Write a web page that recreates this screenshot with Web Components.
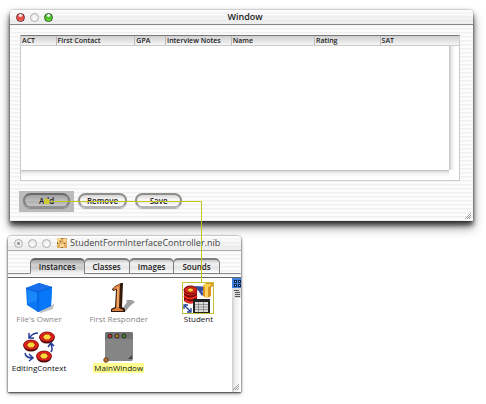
<!DOCTYPE html>
<html lang="en">
<head>
<meta charset="utf-8">
<title>Interface Builder</title>
<style>
  html { background: #fff; }
  body {
    margin: 0;
    font-family: "Open Sans", "Noto Sans", sans-serif;
    font-size: 8px;
    line-height: 10px;
    color: #222;
    --stripes: repeating-linear-gradient(#fcfcfc 0 2px, #f0f0f0 2px 3px, #f6f6f6 3px 4px);
  }
</style>
</head>
<body>
<desk-top>
  <aqua-window class="form" lights="active" heading="Window">
    <form-body></form-body>
  </aqua-window>
  <aqua-window class="nib" lights="idle" heading="StudentFormInterfaceController.nib" document>
    <tab-bar></tab-bar>
    <instance-pane>
      <nib-item icon="cube" dim>File's Owner</nib-item>
      <nib-item icon="one" dim>First Responder</nib-item>
      <nib-item icon="student">Student</nib-item>
      <nib-item icon="context">EditingContext</nib-item>
      <nib-item icon="window" marked>MainWindow</nib-item>
    </instance-pane>
  </aqua-window>
  <connection-line></connection-line>
</desk-top>

<script>
const define = (name, html, setup) => {
  const tpl = document.createElement('template');
  tpl.innerHTML = html;
  customElements.define(name, class extends HTMLElement {
    constructor() {
      super();
      this.attachShadow({ mode: 'open' }).append(document.importNode(tpl.content, true));
    }
    connectedCallback() { if (setup) setup(this, this.shadowRoot); }
  });
};

define('desk-top', `
<style>
  :host { display: flex; flex-direction: column; align-items: flex-start; gap: 15px; position: relative; padding: 10px 13px 12px 8px; }
  ::slotted(.form) { align-self: stretch; margin-left: 2px; box-shadow: 0 0 2px #0007, 0 4px 5px #000a, 0 6px 11px #0007; }
  ::slotted(.nib) { width: 50%; min-width: 232px; box-shadow: 0 0 2px #0008, 0 1px 2px #0009, 0 2px 4px #0004; }
</style>
<slot></slot>`);

define('traffic-lights', `
<style>
  :host { display: flex; gap: 5px; }
  button { appearance: none; width: 9px; height: 9px; padding: 0; border: 1px solid #b0b0b0; border-radius: 50%; background: radial-gradient(circle at 50% 70%, #fff, #e2e2e2); }
  :host([state=active]) .close { border-color: #6e2a28; background: radial-gradient(circle at 50% 15%, #fff 0 10%, #e23c34 45%, #ff8d82); }
  :host([state=active]) .zoom { border-color: #255a12; background: radial-gradient(circle at 50% 15%, #fff 0 10%, #37b812 45%, #aaff70); }
  :host([state=idle]) .close { background: radial-gradient(#999 0 1px, #eee 2px); }
</style>
<button class="close" aria-label="Close"></button><button aria-label="Minimize"></button><button class="zoom" aria-label="Zoom"></button>`);

define('resize-grip', `
<style>:host { display: block; width: 9px; height: 9px; } svg { display: block; }</style>
<svg width="9" height="9" viewBox="0 0 9 9"><path d="M2 8 8 2M4 8l4-4M6 8l2-2" stroke="#888" stroke-width=".8"/></svg>`);

define('aqua-window', `
<style>
  :host { display: block; position: relative; background: var(--stripes); border-radius: 4px 4px 0 0; }
  header { display: grid; grid-template-columns: auto 1fr 22px; align-items: center; box-sizing: border-box; height: 15px; padding: 0 14px 0 6px; border-bottom: 1px solid #888; border-radius: 4px 4px 0 0; background: linear-gradient(#fff8, #d8d8d866), var(--stripes); }
  h1 { display: flex; justify-content: center; align-items: center; gap: 3px; margin: 0; font-size: 9px; line-height: 12px; font-weight: 600; white-space: nowrap; }
  :host([document]) header { grid-template-columns: auto 1fr; column-gap: 6px; padding: 0 6px; border-color: #aaa; }
  :host([document]) h1 { justify-content: flex-start; font-weight: 400; color: #444; }
  h1 svg { display: none; }
  :host([document]) h1 svg { display: block; }
  resize-grip { position: absolute; right: 1px; bottom: 1px; }
</style>
<header><traffic-lights></traffic-lights>
<h1><svg width="10" height="10" viewBox="0 0 10 10"><rect width="10" height="10" fill="#e0b068"/><path d="M0 0h4v2H2v3H0zM6 1h3v3H7zM3 6h4v3H3z" fill="#f8d994"/><path d="M4 0h2v1H4zM0 4h1v2H0zM3 3h1v1H3zM7 5h1v1H7zM4 9h2v1H4z" fill="#9b6326"/></svg><span></span></h1></header>
<slot></slot><resize-grip></resize-grip>`,
(el, root) => {
  root.querySelector('span').textContent = el.getAttribute('heading');
  root.querySelector('traffic-lights').setAttribute('state', el.getAttribute('lights'));
});

define('record-table', `
<style>
  :host { display: grid; grid-template: auto 124px 10px / 1fr 10px; border: 1px solid #ccc; border-top-color: #777; background: #fff; }
  table { grid-column: 1 / 3; width: 100%; table-layout: fixed; border-collapse: collapse; background: linear-gradient(#d0d0d0, #eee 70%, #fafafa); }
  th { height: 9px; padding: 0 0 0 1px; border-bottom: 1px solid #ccc; border-left: 1px solid #bbb; text-align: left; font-size: 7px; line-height: 8px; font-weight: 600; white-space: nowrap; }
  th:first-child { border-left: 0; }
  .v { background: linear-gradient(90deg, #bbb, #e6e6e6 2px, #f3f3f3 4px, #fff 6px); }
  .h { background: linear-gradient(#bbb, #e6e6e6 2px, #f5f5f5 4px, #fff 7px); }
</style>
<table>
  <colgroup><col style="width:8%"><col style="width:18%"><col style="width:7%"><col style="width:15%"><col style="width:19%"><col style="width:15%"><col style="width:18%"></colgroup>
  <thead><tr><th>ACT</th><th>First Contact</th><th>GPA</th><th>Interview Notes</th><th>Name</th><th>Rating</th><th>SAT</th></tr></thead>
</table>
<div></div><div class="v"></div><div class="h"></div>`);

define('aqua-button', `
<style>
  :host { display: block; padding: 2px 4px 4px; }
  :host([selected]) { background: #bbb; }
  button { appearance: none; display: block; min-width: 47px; height: 15px; padding: 0 7px; border: 2px solid #8f8f8a; border-bottom-color: #b4b4b4; border-radius: 8px; background: linear-gradient(#d5d5d5, #fafafa 45%, #e8e8e8 60%, #fff); color: #222; font: 600 8px/10px "Open Sans", sans-serif; box-shadow: 0 1px 1px #0004; }
  :host([selected]) button { border-color: #6a6a6a #7c7c7c #909090; background: linear-gradient(#a0a0a0, #bcbcbc 50%, #b0b0b0 60%, #c8c8c8); }
</style>
<button><slot></slot></button>`);

define('form-body', `
<style>
  :host { display: flex; flex-direction: column; gap: 10px; padding: 10px 13px 9px 9px; }
  record-table { margin-left: 1px; }
  div { display: flex; }
</style>
<record-table></record-table>
<div><aqua-button selected>Add</aqua-button><aqua-button>Remove</aqua-button><aqua-button>Save</aqua-button></div>`);

define('tab-bar', `
<style>
  :host { display: block; padding: 7px 0 3px; }
  div { display: flex; justify-content: center; background: linear-gradient(#888, #888) bottom / 100% 1px no-repeat; }
  button { appearance: none; height: 16px; margin: 0 -1px 0 0; padding: 0 8px; border: 1px solid #808080; border-top-width: 2px; border-radius: 5px 5px 0 0; background: linear-gradient(#ccc, #f2f2f2 30%, #e4e4e4 60%, #fff); color: #222; font: 600 8px/10px "Open Sans", sans-serif; }
  button[aria-selected=true] { border-color: #666 #777 #f4f4f4; background: linear-gradient(#a4a4a4, #d4d4d4 40%, #c6c6c6 60%, #f4f4f4); }
</style>
<div role="tablist"><button role="tab" aria-selected="true">Instances</button><button role="tab">Classes</button><button role="tab">Images</button><button role="tab">Sounds</button></div>`);

define('instance-pane', `
<style>
  :host { display: grid; grid-template-columns: 1fr 9px; border-top: 1px solid #666; background: #fff; }
  .items { display: grid; grid-template-columns: 62fr 97fr 62fr; gap: 7px 0; padding: 4px 2px 19px 0; }
  aside { background: linear-gradient(90deg, #ccc, #eee 3px, #f7f7f7 6px, #fff); }
  button { appearance: none; display: block; width: 9px; height: 10px; padding: 0; border: 0; background: #ddd; }
  button.on { background: #3d80dc; }
  svg { display: block; }
</style>
<div class="items"><slot></slot></div>
<aside>
  <button class="on" aria-label="Icon view"><svg width="9" height="10" viewBox="0 0 9 10"><path d="M2 2h3v3H2zM6 2h3v3H6zM2 6h3v3H2zM6 6h3v3H6z" fill="#0b2553"/><path d="M3 3h1v1H3zM7 3h1v1H7zM3 7h1v1H3zM7 7h1v1H7z" fill="#9cc8ff"/></svg></button>
  <button aria-label="List view"><svg width="9" height="10" viewBox="0 0 9 10"><path d="M2 2.500h5M3 4.500h5M3 6.500h5M3 8.500h5" stroke="#555"/></svg></button>
</aside>`);

const ring = (x, y) => `<g transform="translate(${x} ${y})"><ellipse cy="1" rx="7.500" ry="5.500" fill="#3a0808"/><ellipse rx="7.500" ry="5" fill="#e0201a"/><ellipse rx="7.500" ry="5" fill="none" stroke="#7a0c0c" stroke-width=".8"/><ellipse rx="4.200" ry="3" fill="#8a1208"/><path d="M-4 0-2-2.500h4L4 0 2 2.500h-4z" fill="#ffd83a"/></g>`;
const icons = {
  cube: `<path d="M14 29 31 22 30 27 18 31z" fill="#9a9a9a" opacity=".6"/><path d="M3 6 16 1 29 5 28 24 15 30 4 23z" fill="#0a78f5"/><path d="M3 6 16 1 29 5 15 10z" fill="#1a70ec"/><path d="M15 10 29 5 28 24 15 30z" fill="#0878fa"/><path d="M3 6 15 10v20M15 10 29 5" fill="none" stroke="#0757c8" stroke-width=".8"/><path d="M4 23l12-5 12 6M16 1v17" fill="none" stroke="#0757c8" stroke-width=".5" opacity=".5"/><path d="M5 8l9 3v8l-9 3z" fill="#35a0ff" opacity=".4"/>`,
  one: `<path d="M17 30 24 20 23 18 29 18 32 20 27 24 22 30z" fill="#777" opacity=".7"/><path d="M12 4 18 1h2l-1 24 3 2v3H8v-3l4-2 1-17-3 1-1-2z" fill="#35190b"/><path d="M11 5 17 2l-1 24 4 2v1H9v-1l4-2 1-19-4 1z" fill="#d98243"/><path d="M15 5v20" stroke="#f6b06e" stroke-width="1.500"/>`,
  student: `<rect x="1" y="1" width="30" height="30" fill="#fff"/><path d="M13 4 27 5 20 14z" fill="#304aa0"/><path d="M19 10 26 3v11z" fill="#7e91c8"/><path d="M21 4 24 1h7v3l-2 1v9q-4 3-8 0z" fill="#dc9421"/><path d="M23 5h3v10h-3z" fill="#ffd264"/><path d="M23 2h7l-3 3h-5z" fill="#ffd34a"/><path d="M2 8v11q6 5 13 0V8z" fill="#6f0909"/><path d="M2 10q6 5 13 0M2 14q6 5 13 0M3 18q6 5 11 0" stroke="#f02a20" stroke-width="2" fill="none"/><ellipse cx="8.500" cy="8" rx="6.500" ry="4" fill="#e4201a" stroke="#5e0a08"/><ellipse cx="8.500" cy="8" rx="3" ry="2" fill="#ffd13e" stroke="#8a1208" stroke-width=".7"/><rect x="11" y="17" width="17" height="14" fill="#222"/><rect x="13" y="20" width="13" height="10" fill="#ddd"/><path d="M13 22.500h13M13 25h13M13 27.500h13M16.500 20v10M21.500 20v10" stroke="#777" stroke-width=".7"/><path d="M3 24 8 29M2 27v-4h4M9 26v4H5" stroke="#1c3b96" stroke-width="1.300" fill="none"/><rect x=".5" y=".5" width="31" height="31" fill="none" stroke="#c5c03a"/>`,
  context: `${ring(24, 6)}${ring(8, 14)}${ring(21, 25)}<g fill="none" stroke="#243c98" stroke-width="1.500"><path d="M15 2Q10 2 7 6M6 2v5h5M2 22q1 5 7 5M6 23l4 4-4 3M28 21q2-3 0-8M25 16l3-4 3 3"/></g>`,
  window: `<rect x="2" y="1" width="28" height="29" rx="2" fill="#858585"/><path d="M2 8V3q0-2 2-2h24q2 0 2 2v5z" fill="#737373"/><g stroke="#252525" stroke-width="1"><circle cx="7" cy="5" r="2" fill="#d33232"/><circle cx="14" cy="5" r="2" fill="#c48126"/><circle cx="21" cy="5" r="2" fill="#3d9128"/></g><path d="M25 28l4-4v4z" fill="#444"/><circle cx="3" cy="29" r="2.300" fill="#b9702f" stroke="#543014" stroke-width=".8"/>`
};

define('nib-item', `
<style>
  :host { display: flex; flex-direction: column; align-items: center; color: #111; white-space: nowrap; font-size: 8px; line-height: 10px; }
  :host([dim]) { color: #888; }
  svg { display: block; width: 32px; height: 32px; }
  span { padding: 0 1px; font-weight: 500; }
  :host([marked]) span { background: #ffff91; }
</style>
<svg viewBox="0 0 32 32" aria-hidden="true"></svg><span><slot></slot></span>`,
(el, root) => { root.querySelector('svg').innerHTML = icons[el.getAttribute('icon')]; });

define('connection-line', `
<style>
  :host { position: absolute; left: 46px; top: 201px; width: 156px; height: 81px; pointer-events: none; background: linear-gradient(#c6c61e, #c6c61e) top / 100% 1px no-repeat, linear-gradient(#c6c61e, #c6c61e) right / 1px 100% no-repeat; }
  i { position: absolute; left: -2px; top: -2px; width: 5px; height: 5px; background: #cfca2d; }
</style>
<i></i>`);
</script>
</body>
</html>
